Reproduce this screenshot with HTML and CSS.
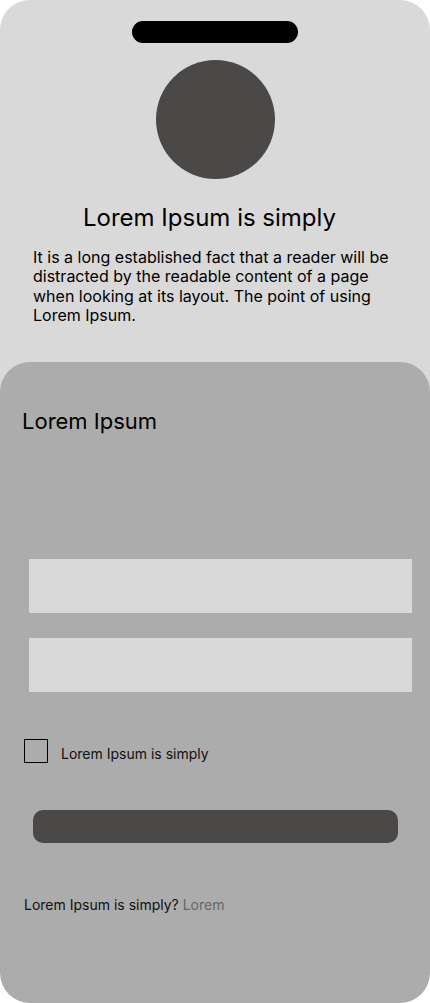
FILE: index.html
```html
<!DOCTYPE html>
<html lang="en">
<head>
<meta charset="utf-8">
<title>Lorem Ipsum</title>
<link rel="stylesheet" href="styles.css">
</head>
<body>
<div class="phone">
  <div class="top">
    <div class="notch"></div>
    <div class="avatar"></div>
    <h1 class="title">Lorem Ipsum is simply</h1>
    <p class="intro">It is a long established fact that a reader will be distracted by the readable content of a page when looking at its layout. The point of using Lorem Ipsum.</p>
  </div>
  <div class="sheet">
    <h2 class="sheet-title">Lorem Ipsum</h2>
    <div class="fields">
      <div class="field"></div>
      <div class="field"></div>
    </div>
    <label class="check-row">
      <span class="checkbox"></span>
      <span class="check-label">Lorem Ipsum is simply</span>
    </label>
    <div class="button"></div>
    <p class="footer-text">Lorem Ipsum is simply? <span class="link">Lorem</span></p>
  </div>
</div>
</body>
</html>
```
FILE: styles.css
```css
html, body {
  margin: 0;
  padding: 0;
  background: #ffffff;
}

body {
  font-family: Inter, "Noto Sans", sans-serif;
  color: #000;
}

.phone {
  width: 430px;
  height: 1003px;
  background: #d9d9d9;
  border-radius: 30px;
  display: flex;
  flex-direction: column;
  overflow: hidden;
}

.top {
  display: flex;
  flex-direction: column;
  align-items: center;
  padding-top: 21px;
}

.notch {
  width: 166px;
  height: 22px;
  border-radius: 11px;
  background: #000;
}

.avatar {
  width: 119px;
  height: 119px;
  border-radius: 50%;
  background: #4a4948;
  margin-top: 17px;
}

.title {
  align-self: flex-start;
  margin: 24px 0 0 83px;
  font-size: 24px;
  font-weight: 400;
  line-height: 29px;
}

.intro {
  align-self: stretch;
  margin: 16px 33px 0;
  font-size: 16px;
  line-height: 19.4px;
  font-weight: 400;
}

.sheet {
  margin-top: 36px;
  flex: 1;
  background: #acacac;
  border-radius: 30px;
  padding-top: 46px;
  display: flex;
  flex-direction: column;
}

.sheet-title {
  margin: 0 0 0 22px;
  font-size: 22px;
  font-weight: 400;
  line-height: 26px;
}

.fields {
  margin: 125px 18px 0 29px;
  display: flex;
  flex-direction: column;
  gap: 25px;
}

.field {
  height: 54px;
  background: #d9d9d9;
}

.check-row {
  margin: 47px 0 0 24px;
  display: flex;
  align-items: flex-start;
  gap: 13px;
}

.checkbox {
  width: 22px;
  height: 22px;
  border: 1px solid #000;
  flex: none;
}

.check-label {
  font-size: 14px;
  line-height: 17px;
  padding-top: 6px;
  color: #111;
}

.button {
  margin: 47px 32px 0 33px;
  height: 33px;
  border-radius: 10px;
  background: #4a4948;
}

.footer-text {
  margin: 53px 0 0 24px;
  font-size: 14px;
  line-height: 17px;
  color: #111;
}

.link {
  color: #666;
}
```
